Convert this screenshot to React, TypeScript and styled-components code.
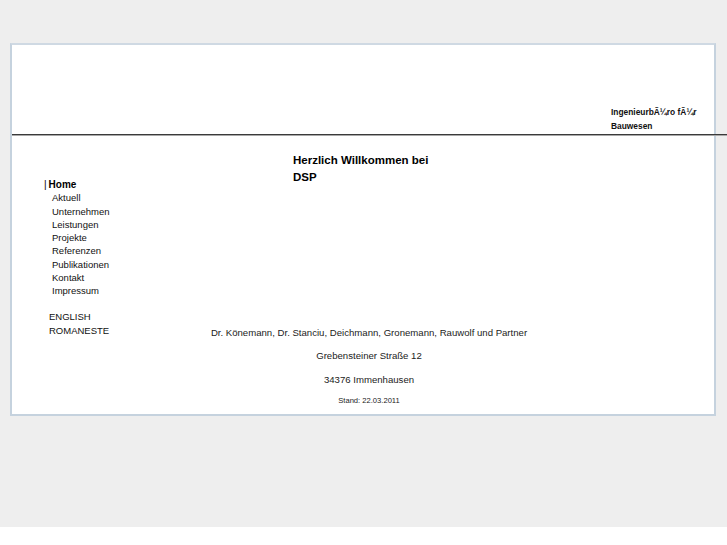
import React from "react";
import styled, { createGlobalStyle } from "styled-components";

const Global = createGlobalStyle`
  html, body { margin: 0; padding: 0; background: #ffffff; }
  body { font-family: "Liberation Sans", Arial, Helvetica, sans-serif; color: #000; }
`;

const Page = styled.div`
  background: #eeeeee;
  height: 527px;
  padding: 43px 0 0 10px;
  box-sizing: border-box;
`;

const Frame = styled.div`
  width: 706px;
  box-sizing: border-box;
  border: 2px solid #c5d2de;
  border-top-color: #cfd9e3;
  background: #ffffff;
`;

const Header = styled.header`
  height: 89px;
  display: flex;
  justify-content: flex-end;
  align-items: flex-end;
  box-sizing: border-box;
  padding-bottom: 1px;
`;

const Tagline = styled.div`
  width: 103px;
  font-size: 8.4px;
  font-weight: bold;
  line-height: 14px;
  color: #111;
`;

const Rule = styled.div`
  height: 1px;
  background: #3a3a3a;
  border-bottom: 1px solid #a8a8a8;
  margin-right: -13px;
`;

const Body = styled.div`
  display: grid;
  grid-template-columns: 140px 1fr;
`;

const Nav = styled.nav`
  padding: 42px 0 0 32px;
  font-size: 9.5px;
  line-height: 13.25px;
  color: #111;
`;

const NavItem = styled.div<{ $active?: boolean }>`
  padding-left: ${(p) => (p.$active ? "0" : "8px")};
  font-weight: ${(p) => (p.$active ? "bold" : "normal")};
  font-size: ${(p) => (p.$active ? "10px" : "9.5px")};
  color: ${(p) => (p.$active ? "#000" : "#111")};
`;

const Bar = styled.span`
  margin-right: 2px;
  font-weight: normal;
`;

const LangList = styled.div`
  margin-top: 13px;
  padding-left: 5px;
`;

const Content = styled.main`
  padding: 16px 128px 3px 0;
`;

const Welcome = styled.h1`
  margin: 0 0 0 141px;
  width: 150px;
  font-size: 11.5px;
  line-height: 17px;
  font-weight: bold;
`;

const Footer = styled.div`
  margin-top: 135px;
  text-align: center;
  color: #222;
`;

const FooterLine = styled.p<{ $small?: boolean }>`
  margin: 0;
  font-size: ${(p) => (p.$small ? "7.6px" : "9.6px")};
  line-height: ${(p) => (p.$small ? "20px" : "23.3px")};
`;

const navItems = [
  "Aktuell",
  "Unternehmen",
  "Leistungen",
  "Projekte",
  "Referenzen",
  "Publikationen",
  "Kontakt",
  "Impressum",
];

export default function App() {
  return (
    <>
      <Global />
      <Page>
        <Frame>
          <Header>
            <Tagline>
              IngenieurbÃ¼ro fÃ¼r
              <br />
              Bauwesen
            </Tagline>
          </Header>
          <Rule />
          <Body>
            <Nav>
              <NavItem $active>
                <Bar>|</Bar>Home
              </NavItem>
              {navItems.map((n) => (
                <NavItem key={n}>{n}</NavItem>
              ))}
              <LangList>
                <div>ENGLISH</div>
                <div>ROMANESTE</div>
              </LangList>
            </Nav>
            <Content>
              <Welcome>
                Herzlich Willkommen bei
                <br />
                DSP
              </Welcome>
              <Footer>
                <FooterLine>
                  Dr. Könemann, Dr. Stanciu, Deichmann, Gronemann, Rauwolf und Partner
                </FooterLine>
                <FooterLine>Grebensteiner Straße 12</FooterLine>
                <FooterLine>34376 Immenhausen</FooterLine>
                <FooterLine $small>Stand: 22.03.2011</FooterLine>
              </Footer>
            </Content>
          </Body>
        </Frame>
      </Page>
    </>
  );
}
